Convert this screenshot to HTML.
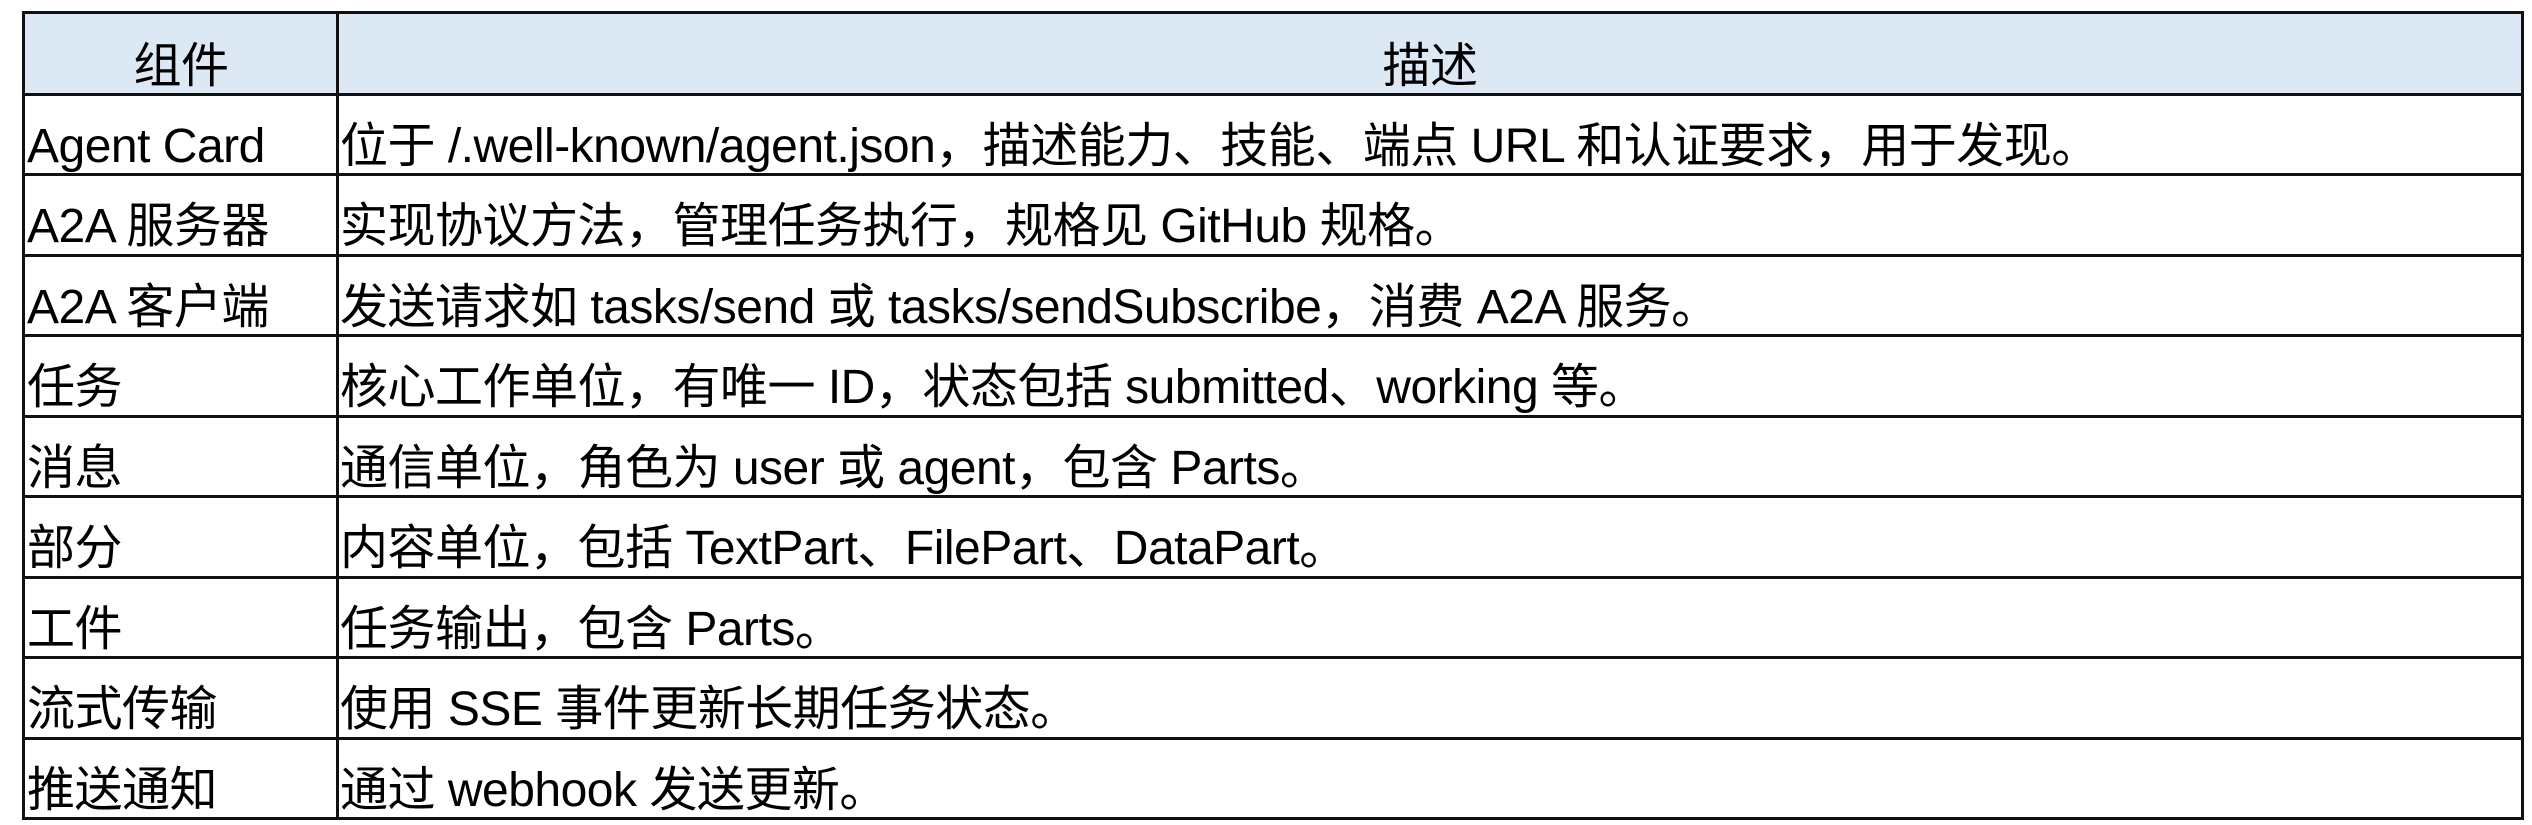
<!DOCTYPE html>
<html><head><meta charset="utf-8"><style>
html,body{margin:0;padding:0;background:#fff;width:2532px;height:825px;overflow:hidden}
body{position:relative;font-family:"Liberation Sans","Noto Sans CJK SC",sans-serif;font-size:48px;letter-spacing:-0.5px;color:#000}
.c{position:absolute;display:flex;align-items:flex-end;line-height:1;white-space:nowrap;box-sizing:border-box;padding-bottom:3px}
.h{background:#dde8f5;justify-content:center}
.hl{position:absolute;height:3px;background:#111}
.vl{position:absolute;width:3px;background:#111}
</style></head><body>
<div class="c h" style="left:24px;top:12px;width:314px;height:82px">组件</div>
<div class="c h" style="left:338px;top:12px;width:2184px;height:82px">描述</div>

<div class="c" style="left:27px;top:94px;height:80px">Agent Card</div>
<div class="c" style="left:340px;top:94px;height:80px">位于 /.well-known/agent.json，描述能力、技能、端点 URL 和认证要求，用于发现。</div>
<div class="c" style="left:27px;top:174px;height:80px">A2A 服务器</div>
<div class="c" style="left:340px;top:174px;height:80px">实现协议方法，管理任务执行，规格见 GitHub 规格。</div>
<div class="c" style="left:27px;top:255px;height:80px">A2A 客户端</div>
<div class="c" style="left:340px;top:255px;height:80px">发送请求如 tasks/send 或 tasks/sendSubscribe，消费 A2A 服务。</div>
<div class="c" style="left:27px;top:335px;height:80px">任务</div>
<div class="c" style="left:340px;top:335px;height:80px">核心工作单位，有唯一 ID，状态包括 submitted、working 等。</div>
<div class="c" style="left:27px;top:416px;height:80px">消息</div>
<div class="c" style="left:340px;top:416px;height:80px">通信单位，角色为 user 或 agent，包含 Parts。</div>
<div class="c" style="left:27px;top:496px;height:80px">部分</div>
<div class="c" style="left:340px;top:496px;height:80px">内容单位，包括 TextPart、FilePart、DataPart。</div>
<div class="c" style="left:27px;top:577px;height:80px">工件</div>
<div class="c" style="left:340px;top:577px;height:80px">任务输出，包含 Parts。</div>
<div class="c" style="left:27px;top:657px;height:80px">流式传输</div>
<div class="c" style="left:340px;top:657px;height:80px">使用 SSE 事件更新长期任务状态。</div>
<div class="c" style="left:27px;top:738px;height:80px">推送通知</div>
<div class="c" style="left:340px;top:738px;height:80px">通过 webhook 发送更新。</div>

<div class="hl" style="left:22px;width:2502px;top:11px"></div>
<div class="hl" style="left:22px;width:2502px;top:93px"></div>
<div class="hl" style="left:22px;width:2502px;top:173px"></div>
<div class="hl" style="left:22px;width:2502px;top:254px"></div>
<div class="hl" style="left:22px;width:2502px;top:334px"></div>
<div class="hl" style="left:22px;width:2502px;top:415px"></div>
<div class="hl" style="left:22px;width:2502px;top:495px"></div>
<div class="hl" style="left:22px;width:2502px;top:576px"></div>
<div class="hl" style="left:22px;width:2502px;top:656px"></div>
<div class="hl" style="left:22px;width:2502px;top:737px"></div>
<div class="hl" style="left:22px;width:2502px;top:817px"></div>
<div class="vl" style="left:22px;top:11px;height:809px"></div>
<div class="vl" style="left:336px;top:11px;height:809px"></div>
<div class="vl" style="left:2521px;top:11px;height:809px"></div>
</body></html>
